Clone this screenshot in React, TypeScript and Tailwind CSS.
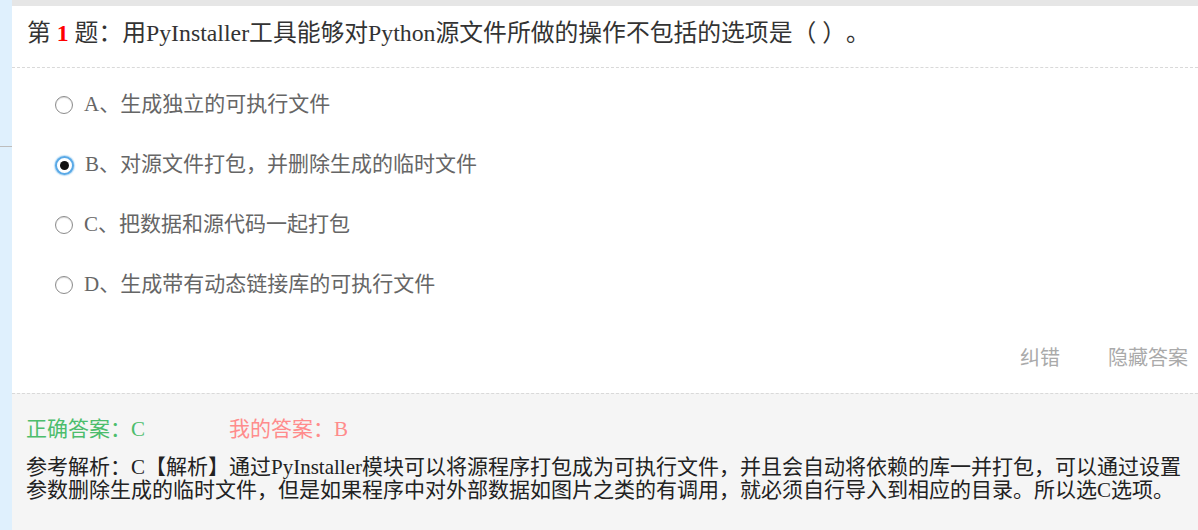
import React, { useState } from "react";

const options = [
  { key: "A", text: "生成独立的可执行文件" },
  { key: "B", text: "对源文件打包，并删除生成的临时文件" },
  { key: "C", text: "把数据和源代码一起打包" },
  { key: "D", text: "生成带有动态链接库的可执行文件" },
];

function Radio({ checked }: { checked: boolean }) {
  if (checked) {
    return (
      <span className="flex h-[19px] w-[19px] shrink-0 items-center justify-center rounded-full border-2 border-[#5aa9e6] bg-white shadow-[0_0_1px_1px_rgba(120,190,240,0.5)]">
        <span className="h-[9px] w-[9px] rounded-full bg-[#111]" />
      </span>
    );
  }
  return (
    <span className="h-[18px] w-[18px] shrink-0 rounded-full border-[1.5px] border-[#8c8c8c] bg-white shadow-[inset_0_1px_1px_rgba(0,0,0,0.15)]" />
  );
}

export default function App() {
  const [picked, setPicked] = useState("B");

  return (
    <div className="flex h-[530px] w-[1198px] overflow-hidden bg-white font-['Liberation_Serif','Noto_Sans_CJK_SC',serif] [text-spacing-trim:space-all]">
      {/* left strip */}
      <div className="flex w-[12px] shrink-0 flex-col bg-[#dff0fd]">
        <div className="h-[147px] border-b border-[#bdbdbd]" />
      </div>

      <div className="flex flex-1 flex-col">
        <div className="h-[6px] bg-[#e6e6e6]" />

        {/* question */}
        <div className="flex h-[387px] flex-col bg-white">
          <div className="flex h-[62px] items-center border-b border-dashed border-[#d9d9d9] px-[15px] pb-[6px] text-[23.8px] text-[#333]">
            第 <span className="font-bold text-[#f00]">&nbsp;1&nbsp;</span>
            题：用PyInstaller工具能够对Python源文件所做的操作不包括的选项是（ ）。
          </div>

          <div className="flex flex-col pl-[43px] pt-[7px]">
            {options.map((o) => (
              <label
                key={o.key}
                onClick={() => setPicked(o.key)}
                className="flex h-[60px] cursor-pointer items-center gap-[11px] text-[21px] text-[#666]"
              >
                <Radio checked={picked === o.key} />
                <span>
                  {o.key}、{o.text}
                </span>
              </label>
            ))}
          </div>

          <div className="mt-[13px] flex h-[60px] items-center justify-end gap-[48px] pr-[10px] text-[20px] text-[#aaa]">
            <span>纠错</span>
            <span>隐藏答案</span>
          </div>
        </div>

        {/* answer */}
        <div className="flex-1 border-t border-dashed border-[#d9d9d9] bg-[#f5f5f5] pl-[14px] pr-[10px] pt-[24px]">
          <div className="flex h-[24px] items-center text-[21px]">
            <span className="w-[203px] text-[#4cbd6c]">正确答案：C</span>
            <span className="text-[#ff8c8c]">我的答案：{picked}</span>
          </div>
          <p className="mt-[14px] text-[21px] leading-[23px] text-[#222]">
            参考解析：C【解析】通过PyInstaller模块可以将源程序打包成为可执行文件，并且会自动将依赖的库一并打包，可以通过设置参数删除生成的临时文件，但是如果程序中对外部数据如图片之类的有调用，就必须自行导入到相应的目录。所以选C选项。
          </p>
        </div>
      </div>
    </div>
  );
}
